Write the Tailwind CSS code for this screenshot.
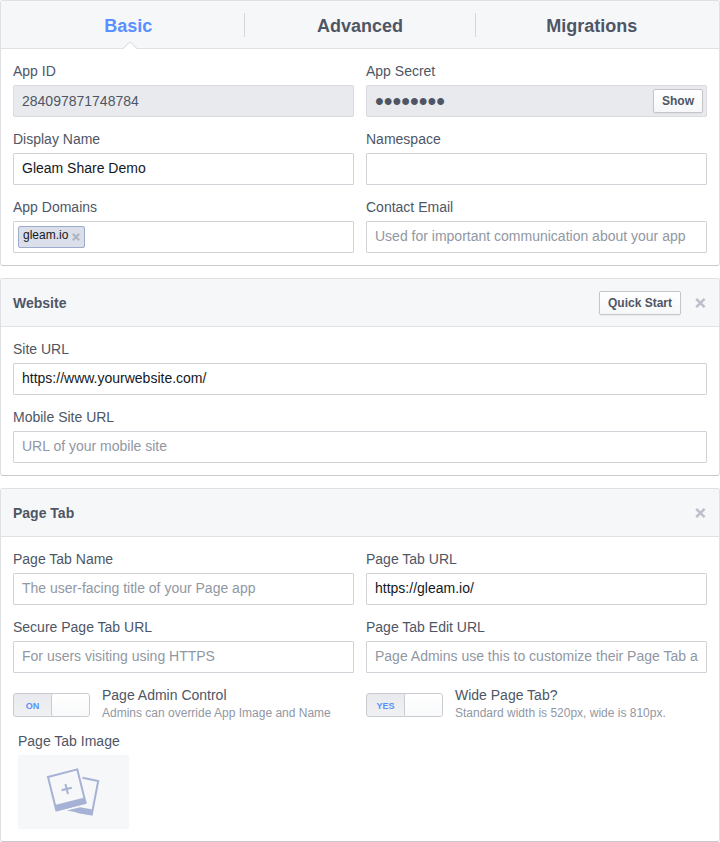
<!DOCTYPE html>
<html lang="en">
<head>
    <meta charset="UTF-8">
    <meta name="viewport" content="width=device-width, initial-scale=1.0">
    <title>App Settings</title>
    <script src="https://cdn.jsdelivr.net/npm/@tailwindcss/browser@4"></script>
</head>
<body class="bg-white font-['Liberation_Sans',Arial,sans-serif] text-sm text-[#4e5665]">

    <main class="flex flex-col gap-3">

        <!-- Basic settings -->
        <section class="border border-[#dfe0e4] border-b-[#c9cbd0] rounded-[3px]">
            <nav class="flex h-12 px-3 pt-3 bg-[#f6f7f9] border-b border-[#e1e2e5] rounded-t-[3px] text-lg/[26px] font-bold text-center">
                <a href="#basic" class="relative flex-1 h-6 text-[#5890ff]" aria-current="page">
                    Basic
                    <!-- Arrow under the active tab -->
                    <svg class="absolute left-1/2 top-7 ml-[-6px]" width="16" height="8" viewBox="0 0 16 8" fill="none">
                        <path d="M1 8 8 1l7 7z" fill="#fff"/>
                        <path d="M1 7.5 8 .8l7 6.7" stroke="#d3d6db"/>
                    </svg>
                </a>
                <a href="#advanced" class="flex-1 h-6 border-l border-[#d3d6db]">Advanced</a>
                <a href="#migrations" class="flex-1 h-6 border-l border-[#d3d6db]">Migrations</a>
            </nav>
            <div class="grid grid-cols-2 gap-3 p-3">
                <div>
                    <label for="appId" class="block mb-1">App ID</label>
                    <input type="text" id="appId" value="284097871748784" readonly
                           class="block w-full h-8 px-2 bg-[#e9eaed] border border-[#d9dbe0] rounded-[2px]">
                </div>
                <div>
                    <label for="appSecret" class="block mb-1">App Secret</label>
                    <div class="flex items-center h-8 pr-[3px] bg-[#e9eaed] border border-[#d9dbe0] rounded-[2px]">
                        <input type="password" id="appSecret" value="xxxxxxxx" readonly
                               class="flex-1 min-w-0 h-full px-2 bg-transparent text-[25px]">
                        <button type="button" class="h-6 px-2 bg-linear-to-b from-white to-[#f6f7f8] border border-[#c4c6ca] rounded-[2px] shadow-xs text-xs font-bold">Show</button>
                    </div>
                </div>
                <div>
                    <label for="displayName" class="block mb-1">Display Name</label>
                    <input type="text" id="displayName" value="Gleam Share Demo"
                           class="block w-full h-8 px-2 pb-[2px] border border-[#d1d3d8] rounded-[1px] text-[#141823]">
                </div>
                <div>
                    <label for="namespace" class="block mb-1">Namespace</label>
                    <input type="text" id="namespace"
                           class="block w-full h-8 px-2 pb-[2px] border border-[#d1d3d8] rounded-[1px] text-[#141823]">
                </div>
                <div>
                    <label for="appDomains" class="block mb-1">App Domains</label>
                    <div class="flex items-center h-8 px-1 border border-[#d1d3d8] rounded-[1px]">
                        <span class="flex items-center gap-1 h-[22px] px-1 bg-[#dadfea] border border-[#9daccc] rounded-[2px] text-xs text-[#141823]">
                            <span class="pb-1">gleam.io</span>
                            <button type="button" aria-label="Remove gleam.io">
                                <svg width="8" height="8" viewBox="0 0 8 8" stroke="#aeb4c1" stroke-width="2"><path d="m.8.8 6.4 6.4M7.2.8.8 7.2"/></svg>
                            </button>
                        </span>
                        <input type="text" id="appDomains" class="flex-1 min-w-0 h-full px-1 text-[#141823] outline-none">
                    </div>
                </div>
                <div>
                    <label for="contactEmail" class="block mb-1">Contact Email</label>
                    <input type="email" id="contactEmail" placeholder="Used for important communication about your app"
                           class="block w-full h-8 px-2 pb-[2px] border border-[#d1d3d8] rounded-[1px] text-[#141823] placeholder:text-[#9197a3]">
                </div>
            </div>
        </section>

        <!-- Website -->
        <section class="border border-[#dfe0e4] border-b-[#c9cbd0] rounded-[3px]">
            <header class="flex items-center h-12 px-3 bg-[#f6f7f9] border-b border-[#e1e2e5] rounded-t-[3px]">
                <h2 class="flex-1 font-bold">Website</h2>
                <button type="button" class="h-6 px-2 bg-linear-to-b from-white to-[#f6f7f8] border border-[#c4c6ca] rounded-[2px] shadow-xs text-xs font-bold">Quick Start</button>
                <button type="button" class="ml-[14px]" aria-label="Remove Website">
                    <svg width="12" height="10" viewBox="0 0 12 10" stroke="#bcc0c9" stroke-width="2.6"><path d="m1.2.9 8.4 8.2M9.6.9 1.2 9.1"/></svg>
                </button>
            </header>
            <div class="grid gap-3 p-3">
                <div>
                    <label for="siteUrl" class="block mb-1">Site URL</label>
                    <input type="url" id="siteUrl" value="https://www.yourwebsite.com/"
                           class="block w-full h-8 px-2 pb-[2px] border border-[#d1d3d8] rounded-[1px] text-[#141823]">
                </div>
                <div>
                    <label for="mobileUrl" class="block mb-1">Mobile Site URL</label>
                    <input type="url" id="mobileUrl" placeholder="URL of your mobile site"
                           class="block w-full h-8 px-2 pb-[2px] border border-[#d1d3d8] rounded-[1px] text-[#141823] placeholder:text-[#9197a3]">
                </div>
            </div>
        </section>

        <!-- Page Tab -->
        <section class="border border-[#dfe0e4] border-b-[#c9cbd0] rounded-[3px]">
            <header class="flex items-center h-12 px-3 bg-[#f6f7f9] border-b border-[#e1e2e5] rounded-t-[3px]">
                <h2 class="flex-1 font-bold">Page Tab</h2>
                <button type="button" aria-label="Remove Page Tab">
                    <svg width="12" height="10" viewBox="0 0 12 10" stroke="#bcc0c9" stroke-width="2.6"><path d="m1.2.9 8.4 8.2M9.6.9 1.2 9.1"/></svg>
                </button>
            </header>
            <div class="p-3">
                <div class="grid grid-cols-2 gap-3">
                    <div>
                        <label for="tabName" class="block mb-1">Page Tab Name</label>
                        <input type="text" id="tabName" placeholder="The user-facing title of your Page app"
                               class="block w-full h-8 px-2 pb-[2px] border border-[#d1d3d8] rounded-[1px] text-[#141823] placeholder:text-[#9197a3]">
                    </div>
                    <div>
                        <label for="tabUrl" class="block mb-1">Page Tab URL</label>
                        <input type="url" id="tabUrl" value="https://gleam.io/"
                               class="block w-full h-8 px-2 pb-[2px] border border-[#d1d3d8] rounded-[1px] text-[#141823]">
                    </div>
                    <div>
                        <label for="secureUrl" class="block mb-1">Secure Page Tab URL</label>
                        <input type="url" id="secureUrl" placeholder="For users visiting using HTTPS"
                               class="block w-full h-8 px-2 pb-[2px] border border-[#d1d3d8] rounded-[1px] text-[#141823] placeholder:text-[#9197a3]">
                    </div>
                    <div>
                        <label for="editUrl" class="block mb-1">Page Tab Edit URL</label>
                        <input type="url" id="editUrl" placeholder="Page Admins use this to customize their Page Tab app"
                               class="block w-full h-8 px-2 pb-[2px] border border-[#d1d3d8] rounded-[1px] text-[#141823] placeholder:text-[#9197a3]">
                    </div>
                    <label class="flex gap-3">
                        <input type="checkbox" class="sr-only" checked>
                        <span class="flex w-[77px] h-6 mt-2 bg-linear-to-b from-[#e9eaed] to-[#f0f1f3] border border-[#c9cbd0] rounded-[3px]">
                            <span class="flex-1 text-center text-[9px]/6 font-bold text-[#5890ff]">ON</span>
                            <span class="w-[38px] bg-linear-to-b from-white to-[#f8f9fa] border-l border-[#c9cbd0] rounded-[2px]"></span>
                        </span>
                        <span>
                            <span class="block">Page Admin Control</span>
                            <span class="block text-xs text-[#9197a3]">Admins can override App Image and Name</span>
                        </span>
                    </label>
                    <label class="flex gap-3">
                        <input type="checkbox" class="sr-only" checked>
                        <span class="flex w-[77px] h-6 mt-2 bg-linear-to-b from-[#e9eaed] to-[#f0f1f3] border border-[#c9cbd0] rounded-[3px]">
                            <span class="flex-1 text-center text-[9px]/6 font-bold text-[#5890ff]">YES</span>
                            <span class="w-[38px] bg-linear-to-b from-white to-[#f8f9fa] border-l border-[#c9cbd0] rounded-[2px]"></span>
                        </span>
                        <span>
                            <span class="block">Wide Page Tab?</span>
                            <span class="block text-xs text-[#9197a3]">Standard width is 520px, wide is 810px.</span>
                        </span>
                    </label>
                </div>
                <div class="mt-[10px] pl-[5px]">
                    <p id="tabImageLabel" class="mb-1">Page Tab Image</p>
                    <button type="button" aria-labelledby="tabImageLabel" class="block w-[111px] h-[74px] bg-[#f6f7f9]">
                        <svg width="111" height="74" viewBox="0 0 111 74" fill="none">
                            <!-- Back photo -->
                            <path d="M64.5 22.8 80.2 26 73.8 59.4 59 57" stroke="#a6b2d5" stroke-width="2"/>
                            <path d="m49 55.6 13-3.4 12.8 2.4-1 6z" fill="#a6b2d5"/>
                            <!-- Front photo -->
                            <path d="M30 22 59.3 14.4 67.6 47.8 38.3 55.3z" fill="#f6f7f9" stroke="#a6b2d5" stroke-width="2"/>
                            <path d="M36.8 50 66.6 42.4 68.6 48.6 38 56.4z" fill="#a6b2d5"/>
                            <path d="m43.6 35.3 10.2-2.6M47.4 28.9l2.6 10.2" stroke="#a6b2d5" stroke-width="2"/>
                        </svg>
                    </button>
                </div>
            </div>
        </section>

    </main>

</body>
</html>
